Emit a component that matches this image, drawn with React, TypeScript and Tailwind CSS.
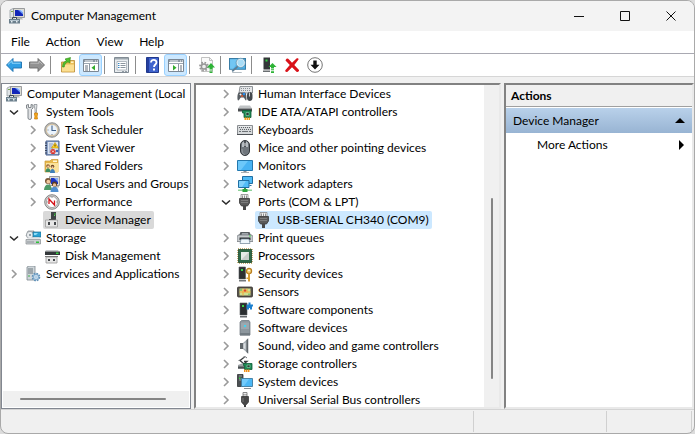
import type { ReactNode } from "react";

type Glyph = () => ReactNode;

function Svg({ children, size = 16 }: { children: ReactNode; size?: number }) {
  return (
    <svg width={size} height={size} viewBox="0 0 16 16" fill="none" className="shrink-0" aria-hidden="true">
      {children}
    </svg>
  );
}

/* ---------- console tree icons ---------- */

const ComputerIcon: Glyph = () => (
  <Svg>
    <path d="M1 2l3-1.500l2 .5v9H1z" fill="#dfe3e6" stroke="#8b9298" strokeWidth=".7" />
    <rect x="2" y="3" width="2" height="1" fill="#7aa84e" />
    <path d="M4.500 .5h11v9h-11z" fill="#dcdcd4" stroke="#85888c" strokeWidth=".8" />
    <path d="M6 2h8v6H6z" fill="#1226b8" />
    <path d="M9 2h5v4.500z" fill="#6f9df5" />
    <path d="M11 2h3v2.500z" fill="#c4dcff" />
    <path d="M8 10h5l1 1.500H8z" fill="#b9bbb6" />
    <path d="M0 11h11v4.500H0z" fill="#6b7f8c" />
    <path d="M3.500 11V9.500h4V11" stroke="#3d4a52" />
    <path d="M1 12h9v1H1z" fill="#b6c6d0" />
    <path d="M2 13h1.500v1.500H2zM7 13h1.500v1.500H7z" fill="#e6edf1" />
  </Svg>
);

const ToolsIcon: Glyph = () => (
  <Svg>
    <path d="M1.500 1v3l1.500 1.500V14c0 2 3.500 2 3.500 0V5.500L8 4V1L6 .5v3H3.500v-3z" fill="#dfe1e3" stroke="#777d82" strokeWidth=".9" />
    <path d="M9 .5h3l-.5 5v3h-1.500v-3z" fill="#e4e6e8" stroke="#7d8388" strokeWidth=".7" />
    <path d="M9.500 9h3v2l-.5 1 .5 3h-3l.5-3-.5-1z" fill="#f5a81c" stroke="#c67a08" strokeWidth=".7" />
  </Svg>
);

const ClockIcon: Glyph = () => (
  <Svg>
    <circle cx="8" cy="8" r="7.300" fill="#b9b9b6" stroke="#7f7f7c" strokeWidth=".8" />
    <circle cx="8" cy="8" r="5.600" fill="#eaf3fc" stroke="#e0c08c" strokeWidth=".7" />
    <path d="M8 3.500v5h4" stroke="#3f5f88" strokeWidth="1.100" />
    <path d="M3.500 8h1M8 12v1" stroke="#777" />
  </Svg>
);

const EventIcon: Glyph = () => (
  <Svg>
    <path d="M2 1h13v14H2z" fill="#8fa6cc" stroke="#4a6390" />
    <path d="M4 2h10v12H4z" fill="#dde5f2" />
    <path d="M5 4h4M5 6h3M5 8h4M5 10h3M5 12h3" stroke="#8a9cbd" />
    <path d="M1 3h2M1 5.500h2M1 8h2M1 10.500h2M1 13h2" stroke="#37435c" />
    <path d="M11 2.500l3.500 5.500h-7z" fill="#ffd326" stroke="#b98c06" strokeWidth=".6" />
    <path d="M11 4.500v2" stroke="#4d3b00" />
    <circle cx="9" cy="11.500" r="2.600" fill="#d8322c" />
    <path d="M8 10.500l2 2M10 10.500l-2 2" stroke="#fff" strokeWidth=".8" />
    <circle cx="13" cy="11" r="1.200" fill="#3e66b8" />
  </Svg>
);

const SharedIcon: Glyph = () => (
  <Svg>
    <path d="M1 3h5l1.500-1.500H14V14H1z" fill="#e8b84c" stroke="#c6983a" strokeWidth=".7" />
    <path d="M2 5h12.500v9H2z" fill="#fbe29a" />
    <path d="M9 2.500h4V4H9z" fill="#fff7d6" />
    <circle cx="4" cy="8" r="1.800" fill="#8a5a33" />
    <path d="M1.500 14c0-5 5-5 5 0z" fill="#3e8d62" />
    <circle cx="8.500" cy="8.500" r="1.800" fill="#704626" />
    <path d="M6 15c0-5.500 5-5.500 5 0z" fill="#3f7fb8" />
    <circle cx="4.200" cy="8.600" r="1" fill="#f3cba2" />
    <circle cx="8.500" cy="9.200" r="1" fill="#f3cba2" />
  </Svg>
);

const UsersIcon: Glyph = () => (
  <Svg>
    <path d="M5.500 .5h10v9h-10z" fill="#d9dad6" stroke="#84878b" strokeWidth=".8" />
    <path d="M7 2h7v6H7z" fill="#1c35c2" />
    <path d="M10 2h4v4z" fill="#86adf5" />
    <path d="M10 10h5v1.500h-5z" fill="#b4b6b2" />
    <circle cx="4" cy="5" r="3" fill="#7a5636" />
    <circle cx="4.300" cy="5.700" r="1.900" fill="#f3c99f" />
    <path d="M0 14c0-7.500 8-7.500 8 0z" fill="#4e9a68" />
    <circle cx="10.500" cy="8" r="2.600" fill="#5b3d23" />
    <circle cx="10.500" cy="8.900" r="1.700" fill="#f0c096" />
    <path d="M6.500 16c0-7 8-7 8 0z" fill="#4f8fd0" />
  </Svg>
);

const PerformanceIcon: Glyph = () => (
  <Svg>
    <circle cx="8" cy="8" r="7.300" fill="#d5d5d3" stroke="#777" strokeWidth=".9" />
    <circle cx="8" cy="8" r="5.600" fill="#fff" stroke="#8d8d8d" strokeWidth=".7" />
    <path d="M5 10V5L10.500 11V6.500" stroke="#d4151b" strokeWidth="1.300" />
    <path d="M8 3v1M12 8h1M3 8h1" stroke="#666" strokeWidth=".7" />
  </Svg>
);

const DeviceIcon: Glyph = () => (
  <Svg>
    <path d="M7 0h5v8H7z" fill="#3f4346" />
    <path d="M10 1h2v2h-2z" fill="#3a7c3d" />
    <path d="M10 3h1v1h-1z" fill="#57d35c" />
    <path d="M1.500 8h12v7h-12z" fill="#e7e7e7" stroke="#9c9c9c" strokeWidth=".8" />
    <path d="M5 7h6v1H5z" fill="#555" />
    <path d="M4 10h2v3H4zM10 10h2v3h-2z" fill="#45484b" />
  </Svg>
);

const StorageIcon: Glyph = () => (
  <Svg>
    <path d="M3 1h6l-1 5H1z" fill="#c4c9cd" stroke="#7f8589" strokeWidth=".7" />
    <circle cx="5" cy="5" r="3.600" fill="#e9ecee" stroke="#8d9499" strokeWidth=".7" />
    <circle cx="5" cy="5" r="1" fill="#79878f" />
    <path d="M8 2h8v5H8z" fill="#2ba3d4" stroke="#1d6c91" strokeWidth=".7" />
    <path d="M9 3h4l-2 2H9z" fill="#8edcf7" />
    <path d="M2 9l2-1.500h10L15.500 9z" fill="#e4e6e8" />
    <path d="M1 9.500h14.500V14H1z" fill="#c9cdd0" stroke="#868c91" strokeWidth=".7" />
    <path d="M11 11.500h3v1.500h-3z" fill="#2fc23a" />
    <path d="M2 12h7" stroke="#8f969b" />
  </Svg>
);

const DiskIcon: Glyph = () => (
  <Svg>
    <path d="M2 2h12l1 1.500H1z" fill="#c5c8ca" />
    <path d="M1 3.500h15V7H1z" fill="#33373a" />
    <path d="M12 4.500h2.500V6H12z" fill="#35d441" />
    <path d="M2 9h11v6H2z" fill="#e7e7e7" stroke="#979797" strokeWidth=".8" />
    <path d="M1 8h13v1H1z" fill="#777" />
    <path d="M4 11h2v2H4zM9 11h2v2H9z" fill="#45484b" />
  </Svg>
);

const ServicesIcon: Glyph = () => (
  <Svg>
    <path d="M2 1l2-1h6v14H2z" fill="#cfd6da" stroke="#7e898f" strokeWidth=".8" />
    <path d="M3 3h5M3 5h5M3 7h5" stroke="#6d797f" />
    <path d="M3 9.500h2v1H3z" fill="#3cae49" />
    <circle cx="11" cy="11" r="3.400" fill="#bcd7ee" stroke="#5f8fb5" strokeWidth="1.800" strokeDasharray="1.700 .95" />
    <circle cx="11" cy="11" r="2.600" fill="#cfe3f4" stroke="#6b9bc1" strokeWidth=".7" />
    <circle cx="11" cy="11" r="1" fill="#fff" stroke="#6b9bc1" strokeWidth=".5" />
  </Svg>
);

/* ---------- device class icons ---------- */

const HidIcon: Glyph = () => (
  <Svg>
    <path d="M3 .5h12.500V7H2z" fill="#e3e5e7" stroke="#767b80" strokeWidth=".8" />
    <path d="M4 2.500h10M4 4.500h10" stroke="#8a9096" strokeDasharray="1 1" />
    <path d="M2 6.500h6c1.500 0 2 8 1 8s-1.500-3-2.500-3H4c-1 0-1.500 3-2.800 3S.2 6.500 2 6.500z" fill="#575d62" />
    <path d="M2.500 8.500h2M3.500 7.500v2" stroke="#fff" strokeWidth=".8" />
    <circle cx="7" cy="8" r="1.200" fill="#2d8ff0" />
    <circle cx="5" cy="10" r="1" fill="#e4572e" />
    <path d="M10 9c0-4 5.500-4 5.500 0v3c0 4-5.500 4-5.500 0z" fill="#43494e" />
    <path d="M12.500 6.500v4" stroke="#c9ced2" />
  </Svg>
);

const IdeIcon: Glyph = () => (
  <Svg>
    <path d="M3 1.500h10l2 3H1z" fill="#c0c3c5" />
    <path d="M1 4.500h14v3H1z" fill="#4a4e51" />
    <path d="M5.500 6.500H14v7H7V9H5.500z" fill="#1e8a55" stroke="#0e5c36" strokeWidth=".8" />
    <path d="M9 8.500h3v3H9z" fill="#2b3a33" stroke="#8fdcb4" strokeWidth=".6" />
    <path d="M7.500 13.500h1.500V16H7.500zM9.500 13.500H11V16H9.500zM11.500 13.500H13V16h-1.500z" fill="#f0a11b" />
  </Svg>
);

const KeyboardIcon: Glyph = () => (
  <Svg>
    <path d="M.5 3.500h15v9H.5z" fill="#d6d9db" stroke="#8a8e92" />
    <path d="M0 12h16v1H0z" fill="#4d5155" />
    <path d="M2 5.500h12M3 7.500h11" stroke="#5d6266" strokeDasharray="1 1" />
    <path d="M2 9.500h2M5 9.500h6M12 9.500h2" stroke="#6d7276" />
    <path d="M1.500 4.500h13" stroke="#fff" strokeWidth=".5" />
  </Svg>
);

const MouseIcon: Glyph = () => (
  <Svg>
    <rect x="3.500" y=".5" width="9" height="15" rx="4.500" fill="#70767c" stroke="#33373b" />
    <path d="M5 6V4c0-1.500 1-2.500 2-2.500V7H5zM11 6V4c0-1.500-1-2.500-2-2.500V7h2z" fill="#b7bdc2" />
    <path d="M8 1v6" stroke="#2d3135" />
    <path d="M7.500 3h1v3h-1z" fill="#e3e6e8" />
    <path d="M5 9c0 6 3 5.500 3 5.500" stroke="#979da2" />
  </Svg>
);

const MonitorIcon: Glyph = () => (
  <Svg>
    <path d="M.5 2.500h15v10H.5z" fill="#48b3f3" stroke="#2378ae" />
    <path d="M1 3h10L4 12H1z" fill="#6cc8fa" />
    <path d="M6.500 13h3v1h-3z" fill="#8b9399" />
    <path d="M4 14h8v1H4z" fill="#a8afb4" />
  </Svg>
);

const NetworkIcon: Glyph = () => (
  <Svg>
    <path d="M5.500 .5h10v7h-10z" fill="#4fbaf5" stroke="#1f6fa3" />
    <path d="M1.500 4.500h10.500v7H1.500z" fill="#52bdf7" stroke="#1f6fa3" />
    <path d="M2 5h7l-4 6H2z" fill="#82d2fb" />
    <path d="M12.500 9h2v1h-2z" fill="#2a72a3" />
    <path d="M7 12h2v1.500H7z" fill="#3c8f45" />
    <path d="M1 13.500h14v1.500H1z" fill="#8fd29a" />
    <path d="M5.500 13h5v3h-5z" fill="#2fa53f" />
  </Svg>
);

const PortIcon: Glyph = () => (
  <Svg>
    <path d="M4 .5h7V5H4z" fill="#f0f0f0" stroke="#8a8a8a" strokeWidth=".8" />
    <path d="M5.500 1.500V4M7.500 1.500V4M9.500 1.500V4" stroke="#777" strokeWidth=".8" />
    <path d="M2.500 4.500h10V9l-2 3h-6l-2-3z" fill="#5a5a5a" stroke="#393939" strokeWidth=".8" />
    <path d="M4 6.500h7M4 8.500h7" stroke="#8c8c8c" strokeWidth=".7" />
    <path d="M6 12h3v4H6z" fill="#484848" />
  </Svg>
);

const PrinterIcon: Glyph = () => (
  <Svg>
    <path d="M3.500 2h9l1.500 3.500H2z" fill="#585d61" />
    <path d="M5 3h6l.5 2h-7z" fill="#a1a7ac" />
    <path d="M1 5h14l1 2v4.500H0V7z" fill="#c6cacd" stroke="#6f7478" strokeWidth=".7" />
    <path d="M2.500 7.500h11V10h-11z" fill="#303437" />
    <path d="M4 9h8l1 4.500H3z" fill="#eef6fc" stroke="#6b8193" strokeWidth=".7" />
    <path d="M12 5.500h2v1h-2z" fill="#41d64a" />
  </Svg>
);

const CpuIcon: Glyph = () => (
  <Svg>
    <rect x="1" y="1" width="14" height="14" stroke="#b8964a" strokeWidth="1.500" strokeDasharray="1 1" />
    <path d="M1.500 1.500h13v13h-13z" fill="#2f6847" stroke="#1c4b31" strokeWidth=".8" />
    <path d="M4 4h8v8H4z" fill="#c8cdcb" />
    <path d="M4 4h8l-8 8z" fill="#e6eae8" />
  </Svg>
);

const SecurityIcon: Glyph = () => (
  <Svg>
    <path d="M2 1h6.500v12H2z" fill="#2c2f31" stroke="#55595c" strokeWidth=".6" />
    <path d="M4 3h2v2H4z" fill="#37d546" />
    <path d="M2 14h7v1.500H2z" fill="#74797c" />
    <circle cx="12" cy="5" r="2.600" fill="#f4cf77" stroke="#b97f20" strokeWidth="1.200" />
    <circle cx="12" cy="4.500" r=".8" fill="#fff" />
    <path d="M11 7.500h2V15l-1 1-1-1zM9.500 11.500H11V13H9.500z" fill="#d79d35" />
  </Svg>
);

const SensorIcon: Glyph = () => (
  <Svg>
    <rect x=".5" y="3" width="15" height="10" rx="1" fill="#55504a" stroke="#37332f" strokeWidth=".8" />
    <path d="M2.500 4.500h11v7h-11z" fill="#cfe092" />
    <path d="M6 4.500v7M2.500 8h11M10 4.500v4" stroke="#f4a83c" />
    <path d="M3 5h2v2H3zM11 9.500h2V11h-2z" fill="#8ac36f" />
    <circle cx="8" cy="6.500" r="1.200" fill="#e0442c" />
  </Svg>
);

const ComponentIcon: Glyph = () => (
  <Svg>
    <path d="M3 1h7v12H3z" fill="#2c2f31" stroke="#55595c" strokeWidth=".6" />
    <path d="M5 3h2v2H5z" fill="#37d546" />
    <path d="M3 14h7v1.500H3z" fill="#66696c" />
    <path d="M9.500 2.500h2v-2h2v2H16v2h-1v3h-2V6h-1v1.500H9.500z" fill="#1c80cf" />
  </Svg>
);

const SoftwareIcon: Glyph = () => (
  <Svg>
    <path d="M4 1l1.500-1h6L13 2v13H3V2z" fill="#8d979e" stroke="#6a747b" strokeWidth=".7" />
    <path d="M4 2.500h8V9H4z" fill="#9ca7ae" />
    <path d="M7 5h2v2H7z" fill="#42d3ef" />
    <path d="M3 13h10v2.500H3z" fill="#717b82" />
  </Svg>
);

const SoundIcon: Glyph = () => (
  <Svg>
    <path d="M3 5h3v6H3z" fill="#60676c" />
    <path d="M6 5l5-4.500v15L6 11z" fill="#a3abb1" />
    <path d="M9.500 2L11 .5v15L9.500 14z" fill="#5f666b" />
    <path d="M11 .5h1v15h-1z" fill="#d5d9dc" />
    <path d="M6.500 6l2-1.500v7l-2-1.500z" fill="#d9dee1" />
  </Svg>
);

const StorageControllerIcon: Glyph = () => (
  <Svg>
    <path d="M7.500 1L3 4.500l4 3.500 3-2.500H7" stroke="#373a3c" strokeWidth="1.300" />
    <path d="M6 1.500l2-1 2 1.500M1.500 5L3 3.500" stroke="#6d7275" />
    <path d="M1 9l4-1.500 3 2V13H1z" fill="#9ca1a4" />
    <path d="M1 10.500h6v2H1z" fill="#4a4e51" />
    <path d="M6.500 7.500h8.500v6H7.500V9.500h-1z" fill="#1e8a55" stroke="#0e5c36" strokeWidth=".8" />
    <path d="M10 9h3v2.500h-3z" fill="#2b3a33" stroke="#8fdcb4" strokeWidth=".6" />
    <path d="M7 13.500h1.500V16H7zM9 13.500h1.500V16H9zM11 13.500h1.500V16H11z" fill="#f0901b" />
  </Svg>
);

const SystemIcon: Glyph = () => (
  <Svg>
    <path d="M.5 .5H6v12H.5z" fill="#4b5053" stroke="#2f3335" strokeWidth=".8" />
    <path d="M2 2h3M2 6h3" stroke="#949a9e" />
    <path d="M2 3.500h1.500V5H2z" fill="#38d745" />
    <path d="M4.500 4.500h11v8h-11z" fill="#4cb8f6" stroke="#eef5fa" strokeWidth=".5" />
    <path d="M5 5h7l-5 7H5z" fill="#73cbfb" />
    <path d="M4.500 4.500h11v8h-11z" stroke="#2a6c96" strokeWidth=".8" />
    <path d="M7 14h7v1H7z" fill="#888f94" />
  </Svg>
);

const UsbIcon: Glyph = () => (
  <Svg>
    <path d="M6 .5h4V5H6z" fill="#ededed" stroke="#7e7e7e" strokeWidth=".9" />
    <path d="M7 2v1.500M9 2v1.500" stroke="#555" strokeWidth=".8" />
    <path d="M4.500 4.500h7V10l-2 2.500h-3l-2-2.500z" fill="#474747" stroke="#2e2e2e" strokeWidth=".7" />
    <path d="M6 6v4" stroke="#858585" strokeWidth=".8" />
    <path d="M7 12.500h2V16H7z" fill="#3b3b3b" />
  </Svg>
);

/* ---------- toolbar icons ---------- */

const BackIcon: Glyph = () => (
  <Svg>
    <path d="M.5 8L7 1.500V5h8.500v6H7v3.500z" fill="#2f9fe4" stroke="#1b6fae" strokeWidth=".9" />
    <path d="M2 7.500L6 3.700v2.500h8.500" stroke="#93d8fb" />
  </Svg>
);

const ForwardIcon: Glyph = () => (
  <Svg>
    <path d="M15.500 8L9 1.500V5H.5v6H9v3.500z" fill="#929292" stroke="#6c6c6c" strokeWidth=".9" />
    <path d="M1.500 6.200H10V4l3.500 3.500" stroke="#bdbdbd" />
  </Svg>
);

const FolderUpIcon: Glyph = () => (
  <Svg>
    <path d="M1.500 5h4l1-1.500h8V15h-13z" fill="#e9bd56" stroke="#b98c33" strokeWidth=".8" />
    <path d="M2 7.500h12v7H2z" fill="#fbdf92" />
    <path d="M11 4.500h2.500V6H11z" fill="#fff3c8" />
    <path d="M2.500 10C2.500 6.500 4 4.500 6.500 3.500L5 2 10.500 .5 9.500 6 8 4.800C5.500 6 4.500 7.500 4.200 10z" fill="#4fc12e" stroke="#2f8a18" strokeWidth=".6" />
  </Svg>
);

function ConsolePane({ mirrored }: { mirrored?: boolean }) {
  return (
    <Svg>
      <path d="M.5 2.500h15v12H.5z" fill="#fff" stroke="#7b8794" />
      <path d="M1 3h14v2H1z" fill="#8e9aa6" />
      <path d="M2 4h8" stroke="#eef2f5" />
      <path d="M12 4h1M14 4h1" stroke="#fff" />
      <path d="M1 6.500h14" stroke="#9ba6b1" />
      <path d={mirrored ? "M10.500 7v7" : "M6.500 7v7"} stroke="#8a96a2" />
      <path d={mirrored ? "M12 9h2M12 11h2M12 13h2" : "M2 9h3M2 11h3M2 13h3"} stroke="#64717e" />
      <path d={mirrored ? "M5 8v5.500l3.500-2.750z" : "M12 8v5.500l-3.500-2.750z"} fill="#31ab2c" />
    </Svg>
  );
}

const TreePaneIcon: Glyph = () => <ConsolePane />;
const ActionPaneIcon: Glyph = () => <ConsolePane mirrored />;

const PropertiesIcon: Glyph = () => (
  <Svg>
    <path d="M.5 .5h14v15H.5z" fill="#e8ecef" stroke="#828c95" />
    <path d="M1 1h13v1.500H1z" fill="#9da7af" />
    <path d="M3 4.500h9.500v8.500H3z" fill="#fff" stroke="#a2abb3" strokeWidth=".8" />
    <path d="M4 6.500h1.500M4 8.500h1.500M4 10.500h1.500" stroke="#3687c4" />
    <path d="M6.500 6.500h5M6.500 8.500h5M6.500 10.500h5" stroke="#8b959e" />
    <path d="M8 14.500h2M11 14.500h2" stroke="#929ca5" />
  </Svg>
);

const HelpIcon: Glyph = () => (
  <Svg>
    <path d="M1.500 .5h12v15h-12z" fill="#3f63cd" stroke="#20398d" />
    <path d="M2 1h2v14H2z" fill="#243f9f" />
    <path d="M6 5.500c0-3.500 5.500-3.300 5.500 0 0 2-2.500 2-2.500 4.500" stroke="#fff" strokeWidth="1.800" />
    <path d="M8 11.500h2v2H8z" fill="#fff" />
  </Svg>
);

const UpdateDriverIcon: Glyph = () => (
  <Svg>
    <path d="M2.500 .5h8l3 3v11h-11z" fill="#fafafa" stroke="#b3b3b3" strokeWidth=".8" />
    <path d="M10.500 .5v3h3" stroke="#b3b3b3" strokeWidth=".8" />
    <circle cx="5" cy="9.500" r="4" stroke="#969696" strokeWidth="1.800" strokeDasharray="1.600 1.540" />
    <circle cx="5" cy="9.500" r="2.600" fill="#eee" stroke="#969696" strokeWidth="1.500" />
    <path d="M12 6l4 4.500h-2.500V12h-3v-1.500H8z" fill="#2db336" />
    <path d="M10.500 12.500h3v1h-3zM10.500 14.500h3v1.500h-3z" fill="#2db336" />
  </Svg>
);

const ScanIcon: Glyph = () => (
  <Svg size={17}>
    <path d="M.5 1.500h15v10H.5z" fill="#4fb3ea" stroke="#397da6" />
    <path d="M1 2h9L4 11H1z" fill="#72c6f3" />
    <path d="M3 14.500h9" stroke="#b5bec4" />
    <path d="M8.500 8.500L3 13.500" stroke="#5d7d94" strokeWidth="1.600" />
    <circle cx="11" cy="5.500" r="3.700" fill="#a8dcf6" stroke="#e7f3f9" strokeWidth="1.200" />
    <circle cx="11" cy="5.500" r="4.300" stroke="#5b8eac" strokeWidth=".7" />
  </Svg>
);

const EnableIcon: Glyph = () => (
  <Svg>
    <path d="M2.500 .5h6.500v12H2.500z" fill="#333638" />
    <path d="M4.500 2.500h2v2h-2z" fill="#32d240" />
    <path d="M2 13.500h7v1.500H2z" fill="#6a6e71" />
    <path d="M11.500 6l4 4H13v1.500h-3V10H7.500z" fill="#2db336" />
    <path d="M10 12.200h3v1h-3zM10 14.200h3v1.800h-3z" fill="#2db336" />
  </Svg>
);

const UninstallIcon: Glyph = () => (
  <Svg>
    <path d="M1.500 3.500C2.500 1 3.800 1 5 2.500l3 3.300L12.500 1.500c1-.8 2.500 0 2 1L10.300 8l4.700 5c.5 1-1.200 2.800-2.500 1.800L8 10.300l-4.500 4.500c-1.500 1-3-.8-2-1.800L5.800 8z" fill="#d9121a" />
  </Svg>
);

const DisableIcon: Glyph = () => (
  <Svg>
    <circle cx="8" cy="8" r="7.300" fill="#fff" stroke="#757575" />
    <path d="M6.300 3.500h3.400v4.200H12.500L8 12.500 3.500 7.700h2.800z" fill="#111" />
  </Svg>
);

/* ---------- tree ---------- */

type Node = {
  label: string;
  icon: Glyph;
  state?: "open" | "closed";
  selected?: "active" | "inactive";
  children?: Node[];
};

const consoleTree: Node[] = [
  {
    label: "System Tools",
    icon: ToolsIcon,
    state: "open",
    children: [
      { label: "Task Scheduler", icon: ClockIcon, state: "closed" },
      { label: "Event Viewer", icon: EventIcon, state: "closed" },
      { label: "Shared Folders", icon: SharedIcon, state: "closed" },
      { label: "Local Users and Groups", icon: UsersIcon, state: "closed" },
      { label: "Performance", icon: PerformanceIcon, state: "closed" },
      { label: "Device Manager", icon: DeviceIcon, selected: "inactive" },
    ],
  },
  {
    label: "Storage",
    icon: StorageIcon,
    state: "open",
    children: [{ label: "Disk Management", icon: DiskIcon }],
  },
  { label: "Services and Applications", icon: ServicesIcon, state: "closed" },
];

const deviceTree: Node[] = [
  { label: "Human Interface Devices", icon: HidIcon, state: "closed" },
  { label: "IDE ATA/ATAPI controllers", icon: IdeIcon, state: "closed" },
  { label: "Keyboards", icon: KeyboardIcon, state: "closed" },
  { label: "Mice and other pointing devices", icon: MouseIcon, state: "closed" },
  { label: "Monitors", icon: MonitorIcon, state: "closed" },
  { label: "Network adapters", icon: NetworkIcon, state: "closed" },
  {
    label: "Ports (COM & LPT)",
    icon: PortIcon,
    state: "open",
    children: [{ label: "USB-SERIAL CH340 (COM9)", icon: PortIcon, selected: "active" }],
  },
  { label: "Print queues", icon: PrinterIcon, state: "closed" },
  { label: "Processors", icon: CpuIcon, state: "closed" },
  { label: "Security devices", icon: SecurityIcon, state: "closed" },
  { label: "Sensors", icon: SensorIcon, state: "closed" },
  { label: "Software components", icon: ComponentIcon, state: "closed" },
  { label: "Software devices", icon: SoftwareIcon, state: "closed" },
  { label: "Sound, video and game controllers", icon: SoundIcon, state: "closed" },
  { label: "Storage controllers", icon: StorageControllerIcon, state: "closed" },
  { label: "System devices", icon: SystemIcon, state: "closed" },
  { label: "Universal Serial Bus controllers", icon: UsbIcon, state: "closed" },
];

function Chevron({ open, label }: { open: boolean; label: string }) {
  return (
    <button type="button" aria-label={(open ? "Collapse " : "Expand ") + label} className="flex h-full w-full items-center justify-center">
      <svg width="10" height="10" viewBox="0 0 10 10" fill="none" aria-hidden="true">
        {open ? (
          <path d="M1 3.500L5 7l4-3.500" stroke="#2b2b2b" strokeWidth="1.600" />
        ) : (
          <path d="M3 1l4 4-4 4" stroke="#9a9a9a" strokeWidth="1.600" />
        )}
      </svg>
    </button>
  );
}

function TreeLabel({ node }: { node: Node }) {
  const Icon = node.icon;
  const tone =
    node.selected === "active" ? "bg-[#cce8ff]" : node.selected === "inactive" ? "bg-[#d9d9d9]" : "";
  return (
    <button type="button" className={`flex h-[18px] items-center gap-[5px] rounded-xs pr-[3px] pl-px whitespace-nowrap ${tone}`}>
      <Icon />
      <span>{node.label}</span>
    </button>
  );
}

function TreeItem({ node }: { node: Node }) {
  return (
    <li role="treeitem" aria-expanded={node.state ? node.state === "open" : undefined} aria-selected={!!node.selected}>
      <div className="flex h-[18px] items-center">
        <span className="h-full w-[19px] shrink-0 pr-0.5">
          {node.state && <Chevron open={node.state === "open"} label={node.label} />}
        </span>
        <TreeLabel node={node} />
      </div>
      {node.children && (
        <ul role="group" className="pl-[19px]">
          {node.children.map((child) => (
            <TreeItem key={child.label} node={child} />
          ))}
        </ul>
      )}
    </li>
  );
}

/* ---------- toolbar ---------- */

type Tool = { label: string; icon: Glyph; pressed?: boolean };

const toolGroups: Tool[][] = [
  [
    { label: "Back", icon: BackIcon },
    { label: "Forward", icon: ForwardIcon },
  ],
  [
    { label: "Up one level", icon: FolderUpIcon },
    { label: "Show/Hide Console Tree", icon: TreePaneIcon, pressed: true },
  ],
  [{ label: "Properties", icon: PropertiesIcon }],
  [
    { label: "Help", icon: HelpIcon },
    { label: "Show/Hide Action Pane", icon: ActionPaneIcon, pressed: true },
  ],
  [{ label: "Update driver", icon: UpdateDriverIcon }],
  [{ label: "Scan for hardware changes", icon: ScanIcon }],
  [
    { label: "Enable device", icon: EnableIcon },
    { label: "Uninstall device", icon: UninstallIcon },
    { label: "Disable device", icon: DisableIcon },
  ],
];

function Toolbar() {
  return (
    <div role="toolbar" className="flex h-[23px] shrink-0 items-center border-b border-[#d6d6d6] bg-white pl-px">
      {toolGroups.map((group, i) => (
        <div key={group[0].label} className="flex items-center">
          {i > 0 && <span className="mr-[5px] ml-0.5 h-[18px] w-px bg-[#8c8c8c]" />}
          {group.map(({ label, icon: Icon, pressed }) => (
            <button
              key={label}
              type="button"
              title={label}
              aria-pressed={pressed}
              className={`flex h-[22px] w-[23px] items-center justify-center rounded-[3px] ${pressed ? "border border-[#99d1ff] bg-[#cce8ff]" : ""}`}
            >
              <Icon />
            </button>
          ))}
        </div>
      ))}
    </div>
  );
}

/* ---------- window ---------- */

const captionButtons = [
  { label: "Minimize", path: "M1 7.500h10" },
  { label: "Maximize", path: "M1.500 2.500h9v9h-9z" },
  { label: "Close", path: "M1.500 2.500l9 9M10.500 2.500l-9 9" },
];

const sunken = "border-2 border-t-[#828282] border-r-[#e9e9e9] border-b-[#e9e9e9] border-l-[#828282] bg-white";

export default function App() {
  return (
    <div className="h-screen bg-[#dcdcdc] font-['Lato','Open_Sans',sans-serif] text-[12px] leading-4 text-black">
      <div className="flex h-full flex-col overflow-hidden rounded-lg border border-[#a9a9a9] bg-[#f0f0f0]">
        <header className="flex h-[30px] shrink-0 items-center justify-between bg-[#f3f3f3] pl-2">
          <div className="flex items-center gap-1.5">
            <ComputerIcon />
            <h1>Computer Management</h1>
          </div>
          <div className="flex h-full">
            {captionButtons.map(({ label, path }) => (
              <button key={label} type="button" aria-label={label} className="flex w-[46px] items-center justify-center">
                <svg width="12" height="14" viewBox="0 0 12 14" fill="none" aria-hidden="true">
                  <path d={path} stroke="#111" strokeLinejoin="round" />
                </svg>
              </button>
            ))}
          </div>
        </header>

        <nav className="flex h-[23px] shrink-0 items-center gap-4 border-b border-[#a9a9b2] bg-white pl-2.5">
          {["File", "Action", "View", "Help"].map((item) => (
            <button key={item} type="button">
              {item}
            </button>
          ))}
        </nav>

        <Toolbar />

        <main className="flex min-h-0 flex-1 pt-1.5">
          <section aria-label="Console tree" className="flex w-[190px] shrink-0 flex-col border border-[#828790] bg-white p-px">
            <div className="min-h-0 flex-1 overflow-hidden pl-0.5">
              <TreeLabel node={{ label: "Computer Management (Local", icon: ComputerIcon }} />
              <ul role="tree">
                {consoleTree.map((node) => (
                  <TreeItem key={node.label} node={node} />
                ))}
              </ul>
            </div>
            <div className="flex h-4 shrink-0 items-center bg-[#f0f0f0] pr-[23px] pl-[17px]">
              <div className="h-0.5 flex-1 rounded-full bg-[#858585]" />
            </div>
          </section>

          <section aria-label="Devices" className={`mx-[3px] flex min-w-0 flex-1 ${sunken}`}>
            <ul role="tree" className="min-w-0 flex-1 overflow-hidden pl-[21px]">
              {deviceTree.map((node) => (
                <TreeItem key={node.label} node={node} />
              ))}
            </ul>
            <div className="flex w-[15px] shrink-0 justify-center bg-[#f0f0f0] pt-[113px] pb-7">
              <div className="w-0.5 rounded-full bg-[#858585]" />
            </div>
          </section>

          <aside className={`w-[190px] shrink-0 ${sunken}`}>
            <h2 className="border-b border-[#a0a0a0] bg-[#f0f0f0] px-[5px] pt-[3px] pb-0.5 font-bold">Actions</h2>
            <button type="button" className="mt-px flex h-[25px] w-full items-center justify-between bg-linear-to-b from-[#b9d1ea] to-[#98b4d3] px-[7px]">
              <span>Device Manager</span>
              <svg width="10" height="5" viewBox="0 0 10 5" aria-hidden="true">
                <path d="M0 5l5-5 5 5z" fill="#000" />
              </svg>
            </button>
            <button type="button" className="flex h-6 w-full items-center justify-between pr-2 pl-[31px]">
              <span>More Actions</span>
              <svg width="5" height="10" viewBox="0 0 5 10" aria-hidden="true">
                <path d="M0 0l5 5-5 5z" fill="#000" />
              </svg>
            </button>
          </aside>
        </main>

        <footer className="flex h-6 shrink-0 border-t border-[#d4d4d4] py-px pr-0.5">
          <div className="flex-1 border-r border-[#d0d0d0]" />
          <div className="w-[133px] border-r border-[#d0d0d0]" />
          <div className="w-[85px] border-r border-[#d0d0d0]" />
        </footer>
      </div>
    </div>
  );
}
